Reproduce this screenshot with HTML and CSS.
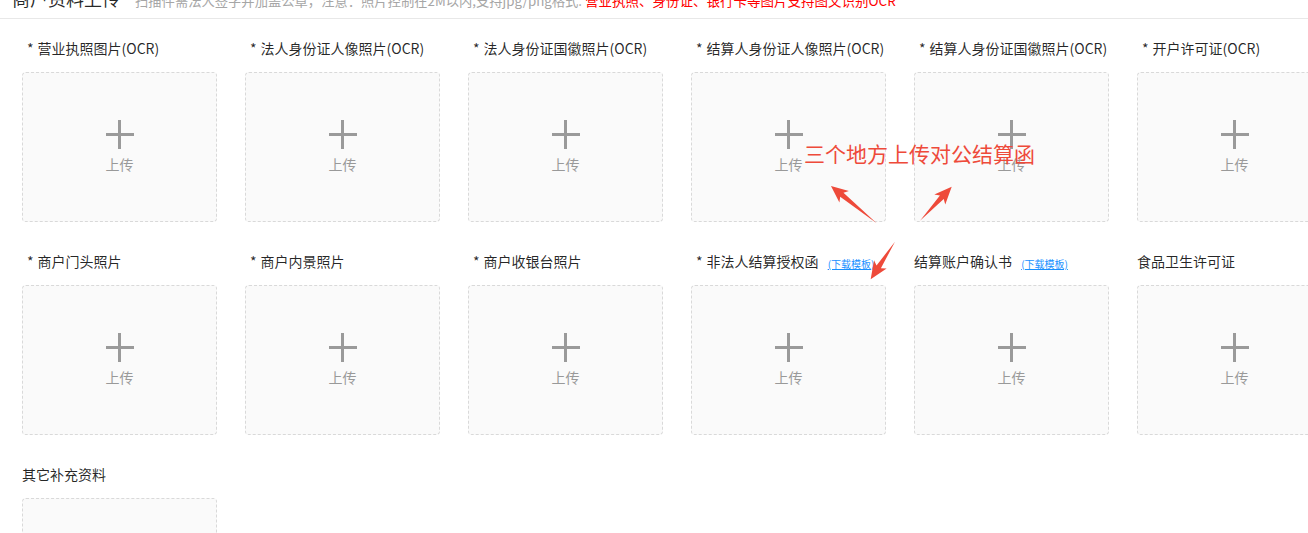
FILE: index.html
```html
<!DOCTYPE html>
<html lang="zh-CN">
<head>
    <meta charset="UTF-8">
    <meta name="viewport" content="width=device-width, initial-scale=1.0">
    <title>商户资料上传</title>
    <link rel="stylesheet" href="styles.css">
</head>
<body>
    <div class="page">
        <div class="page-head">
            <h2 class="page-title">商户资料上传</h2>
            <span class="page-hint">扫描件需法人签字并加盖公章，注意：照片控制在2M以内,支持jpg/png格式.</span>
            <span class="page-warn">营业执照、身份证、银行卡等图片支持图文识别OCR</span>
        </div>

        <div class="field-grid">
            <div class="field">
                <div class="field-label"><span class="req">*</span>营业执照图片(OCR)</div>
                <div class="upload"><i class="plus"></i><span>上传</span></div>
            </div>
            <div class="field">
                <div class="field-label"><span class="req">*</span>法人身份证人像照片(OCR)</div>
                <div class="upload"><i class="plus"></i><span>上传</span></div>
            </div>
            <div class="field">
                <div class="field-label"><span class="req">*</span>法人身份证国徽照片(OCR)</div>
                <div class="upload"><i class="plus"></i><span>上传</span></div>
            </div>
            <div class="field">
                <div class="field-label"><span class="req">*</span>结算人身份证人像照片(OCR)</div>
                <div class="upload"><i class="plus"></i><span>上传</span></div>
            </div>
            <div class="field">
                <div class="field-label"><span class="req">*</span>结算人身份证国徽照片(OCR)</div>
                <div class="upload"><i class="plus"></i><span>上传</span></div>
            </div>
            <div class="field">
                <div class="field-label"><span class="req">*</span>开户许可证(OCR)</div>
                <div class="upload"><i class="plus"></i><span>上传</span></div>
            </div>

            <div class="field">
                <div class="field-label"><span class="req">*</span>商户门头照片</div>
                <div class="upload"><i class="plus"></i><span>上传</span></div>
            </div>
            <div class="field">
                <div class="field-label"><span class="req">*</span>商户内景照片</div>
                <div class="upload"><i class="plus"></i><span>上传</span></div>
            </div>
            <div class="field">
                <div class="field-label"><span class="req">*</span>商户收银台照片</div>
                <div class="upload"><i class="plus"></i><span>上传</span></div>
            </div>
            <div class="field">
                <div class="field-label"><span class="req">*</span>非法人结算授权函 <a class="tpl-link" href="#">(下载模板)</a></div>
                <div class="upload"><i class="plus"></i><span>上传</span></div>
            </div>
            <div class="field">
                <div class="field-label">结算账户确认书 <a class="tpl-link" href="#">(下载模板)</a></div>
                <div class="upload"><i class="plus"></i><span>上传</span></div>
            </div>
            <div class="field">
                <div class="field-label">食品卫生许可证</div>
                <div class="upload"><i class="plus"></i><span>上传</span></div>
            </div>

            <div class="field">
                <div class="field-label">其它补充资料</div>
                <div class="upload"><i class="plus"></i><span>上传</span></div>
            </div>
        </div>

        <!-- screenshot annotation -->
        <div class="note-text">三个地方上传对公结算函</div>
        <svg class="note-arrows" width="1308" height="533" viewBox="0 0 1308 533">
            <g fill="#ee4a3a">
                <polygon transform="translate(876.7 243.3) rotate(-140.8)" points="0,0 45,-2.6 42,-7.5 59,0 42,7.5 45,2.6"/>
                <polygon transform="translate(920 240.7) rotate(-47)" points="0,0 32,-2.6 29,-7.5 46.5,0 29,7.5 32,2.6"/>
                <polygon transform="translate(895 261.7) rotate(122.9)" points="0,0 30,-2.6 27,-7.5 44.8,0 27,7.5 30,2.6"/>
            </g>
        </svg>
    </div>
</body>
</html>
```

FILE: styles.css
```css
html, body {
    margin: 0;
    padding: 0;
    overflow: hidden;
    background: #fff;
}

body {
    font-family: "Noto Sans CJK SC", "Noto Sans", sans-serif;
    font-size: 14px;
    color: rgba(0, 0, 0, 0.85);
}

.page {
    position: relative;
}

.page-head {
    box-sizing: border-box;
    height: 39px;
    margin-top: -20px;
    padding: 5px 12px 0;
    display: flex;
    align-items: baseline;
    border-bottom: 1px solid #e8e8e8;
    white-space: nowrap;
}

.page-title {
    margin: 0 15px 0 0;
    font-size: 18px;
    font-weight: normal;
    line-height: 26px;
    color: rgba(0, 0, 0, 0.85);
}

.page-hint {
    font-size: 13.3px;
    color: #a6a6a6;
}

.page-warn {
    margin-left: 3px;
    font-size: 13.5px;
    color: #ff0000;
}

.field-grid {
    display: grid;
    grid-template-columns: repeat(6, 195px);
    column-gap: 28px;
    row-gap: 28px;
    padding: 18px 0 0 22px;
}

.field-label {
    height: 22px;
    line-height: 22px;
    margin-bottom: 13px;
    white-space: nowrap;
}

.req {
    margin: 0 4px 0 5px;
}

.tpl-link {
    margin-left: 6px;
    font-size: 10px;
    color: #1890ff;
    text-decoration: underline;
    position: relative;
    top: 1px;
}

.upload {
    box-sizing: border-box;
    width: 195px;
    height: 150px;
    border: 1px dashed #d9d9d9;
    border-radius: 4px;
    background: #fafafa;
    display: flex;
    flex-direction: column;
    align-items: center;
    justify-content: center;
    color: #999;
}

.upload span {
    margin-top: 5px;
    line-height: 20px;
    font-size: 14px;
}

.plus {
    position: relative;
    width: 28px;
    height: 29px;
}

.plus::before,
.plus::after {
    content: "";
    position: absolute;
    background: #9a9a9a;
}

.plus::before {
    left: 0;
    right: 0;
    top: 13px;
    height: 3px;
}

.plus::after {
    top: 0;
    bottom: 0;
    left: 12.5px;
    width: 3px;
}

.note-text {
    position: absolute;
    left: 804px;
    top: 163px;
    font-size: 21px;
    line-height: 21px;
    color: #ee4a3a;
    white-space: nowrap;
}

.note-arrows {
    position: absolute;
    left: 0;
    top: 0;
    pointer-events: none;
}
```
